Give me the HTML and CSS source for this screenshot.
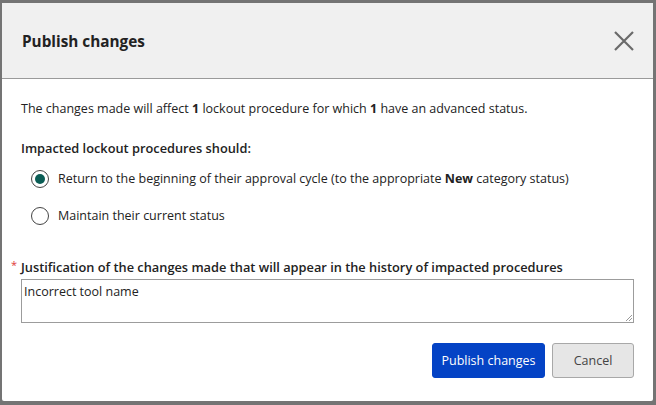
FILE: index.html
```html
<!DOCTYPE html>
<html>
<head>
<meta charset="utf-8">
<link rel="stylesheet" href="styles.css">
</head>
<body>
<div class="backdrop">
  <div class="dialog">
    <div class="header">
      <h1 class="title">Publish changes</h1>
      <button class="close" aria-label="Close">
        <svg width="20" height="20" viewBox="0 0 20 20"><path d="M1 1 L19 19 M19 1 L1 19" stroke="#6a6a6a" stroke-width="2.2" fill="none"/></svg>
      </button>
    </div>
    <div class="body">
      <p class="intro">The changes made will affect <b>1</b> lockout procedure for which <b>1</b> have an advanced status.</p>
      <div class="group-label">Impacted lockout procedures should:</div>
      <div class="options">
        <label class="option"><span class="radio checked"></span><span>Return to the beginning of their approval cycle (to the appropriate <b>New</b> category status)</span></label>
        <label class="option"><span class="radio"></span><span>Maintain their current status</span></label>
      </div>
      <div class="field-label"><span class="req">*</span>Justification of the changes made that will appear in the history of impacted procedures</div>
      <div class="textarea">Incorrect tool name<span class="grip"></span></div>
      <div class="actions">
        <button class="btn primary">Publish changes</button>
        <button class="btn secondary">Cancel</button>
      </div>
    </div>
  </div>
</div>
</body>
</html>
```
FILE: styles.css
```css
html, body {
  margin: 0;
  padding: 0;
}
body {
  width: 656px;
  height: 405px;
  overflow: hidden;
  font-family: "Open Sans", "Noto Sans", sans-serif;
  color: #222;
}
.backdrop {
  width: 656px;
  height: 405px;
  background: #747474;
  padding: 3px 3px 4px 2px;
  box-sizing: border-box;
}
.dialog {
  width: 651px;
  height: 398px;
  background: #fff;
  display: flex;
  flex-direction: column;
  border-radius: 2px;
}
.header {
  height: 76px;
  flex: none;
  background: #f0f0f0;
  border-bottom: 1px solid #9a9a9a;
  display: flex;
  align-items: center;
  justify-content: space-between;
  padding: 0 19px 0 20px;
  box-sizing: border-box;
}
.title {
  margin: 0;
  font-size: 15.3px;
  font-weight: 700;
  color: #222;
}
.close {
  border: 0;
  background: none;
  padding: 0;
  width: 20px;
  height: 20px;
  display: flex;
}
.body {
  padding: 21px 19px 0 19px;
  font-size: 12.5px;
}
.intro {
  margin: 0 0 21px 0;
  line-height: 18px;
}
b {
  font-weight: 700;
}
.group-label {
  font-weight: 600;
  font-size: 12.8px;
  line-height: 18px;
  margin-bottom: 13px;
}
.options {
  display: flex;
  flex-direction: column;
  gap: 19px;
  padding-left: 10px;
}
.option {
  display: flex;
  align-items: center;
  gap: 9px;
  line-height: 18px;
}
.radio {
  width: 16px;
  height: 16px;
  border: 1.5px solid #444;
  border-radius: 50%;
  box-sizing: content-box;
  display: flex;
  align-items: center;
  justify-content: center;
  flex: none;
}
.radio.checked::after {
  content: "";
  width: 10px;
  height: 10px;
  border-radius: 50%;
  background: #0b5d55;
}
.field-label {
  margin-top: 33px;
  font-weight: 600;
  font-size: 12.8px;
  line-height: 18px;
  position: relative;
}
.req {
  color: #e03a3a;
  position: absolute;
  left: -10px;
  top: -2px;
  font-weight: 400;
  font-size: 11px;
}
.textarea {
  margin-top: 3px;
  width: 613px;
  height: 44px;
  border: 1px solid #9c9c9c;
  box-sizing: border-box;
  padding: 3px 2px;
  line-height: 18px;
  position: relative;
}
.grip {
  position: absolute;
  right: 1px;
  bottom: 1px;
  width: 6px;
  height: 6px;
  background: linear-gradient(135deg, transparent 45%, #999 45%, #999 55%, transparent 55%, transparent 70%, #999 70%, #999 80%, transparent 80%);
}
.actions {
  display: flex;
  justify-content: flex-end;
  gap: 7px;
  margin-top: 20px;
  width: 613px;
}
.btn {
  height: 35px;
  border-radius: 3px;
  font-family: inherit;
  font-size: 12.5px;
  padding: 0;
}
.primary {
  width: 113px;
  background: #0443c5;
  color: #fff;
  border: 1px solid #0443c5;
}
.secondary {
  width: 82px;
  background: #e6e6e6;
  color: #444;
  border: 1px solid #a8a8a8;
}
```
